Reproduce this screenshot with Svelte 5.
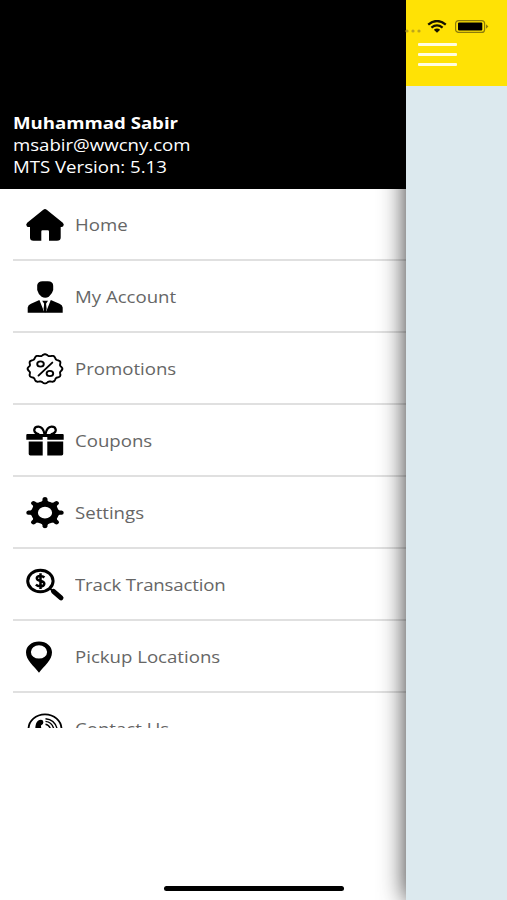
<script>
  const user = {
    name: "Muhammad Sabir",
    email: "msabir@wwcny.com",
    version: "MTS Version: 5.13",
  };

  const items = [
    { icon: "home", label: "Home" },
    { icon: "account", label: "My Account" },
    { icon: "promotions", label: "Promotions" },
    { icon: "coupons", label: "Coupons" },
    { icon: "settings", label: "Settings" },
    { icon: "track", label: "Track Transaction" },
    { icon: "pickup", label: "Pickup Locations" },
    { icon: "contact", label: "Contact Us" },
  ];

  const teeth = [0, 45, 90, 135, 180, 225, 270, 315];

  // wavy edge of the promotions badge
  function badgePath(count) {
    let points = [];
    for (let i = 0; i < 180; i++) {
      const a = (i / 180) * Math.PI * 2;
      const r = 0.95 + 0.05 * Math.cos(a * count);
      const x = (19 + 17.4 * r * Math.sin(a)).toFixed(2);
      const y = (15.8 - 14.6 * r * Math.cos(a)).toFixed(2);
      points.push(`${x} ${y}`);
    }
    return "M" + points.join("L") + "Z";
  }
</script>

<div class="screen">
  <aside class="drawer">
    <header class="profile">
      <div class="wide name">{user.name}</div>
      <div class="wide">{user.email}</div>
      <div class="wide">{user.version}</div>
    </header>

    <nav class="menu">
      {#each items as item}
        <div class="item">
          <svg class="icon" viewBox="0 0 38 32">
            {#if item.icon === "home"}
              <path d="M17.3.8Q19-.6 20.7.8L36.8 13.8Q38.6 15.6 37.2 17.3Q36.5 18.2 34.7 18V28.5Q34.7 31.7 31 31.7H23V22.5Q23 21.3 21.8 21.3H16.5Q15.3 21.3 15.3 22.5V31.7H7.5Q4 31.7 4 28.5V18Q1.6 18.3.8 17.2Q-.6 15.4 1.2 13.8Z" />
            {:else if item.icon === "account"}
              <path d="M11.2 4Q12 0 17 .2H21.4Q27.2 0 27.2 4.8V9Q26.5 12.6 22.8 15.7Q19.3 18 15.6 15.7Q12 12.8 11.2 9Z" />
              <path d="M1.7 31.7V26.4Q2 24 5 22.8L13.4 19L18 30.6L18.2 22.8L16.2 19.8H22L20 22.8L20.2 30.6L24.8 19L33.5 22.8Q36.4 24 36.7 26.4V31.7Z" />
              <path d="M18.2 22.5H20L20.6 28L19.1 31.7L17.6 28Z" />
            {:else if item.icon === "promotions"}
              <g class="line">
                <path d={badgePath(12)} />
                <path d="M12.5 22.6L26.3 9.6" />
                <ellipse cx="14.5" cy="11" rx="3.3" ry="2.6" />
                <ellipse cx="23.9" cy="20.5" rx="3.3" ry="2.6" />
              </g>
            {:else if item.icon === "coupons"}
              <path d="M1.3 9H36.7Q37.7 9 37.7 10V14.8H21.3V12H16.7V14.8H.3V10Q.3 9 1.3 9Z" />
              <path d="M2.7 16.4H16.7V30.4H4.3Q2.7 30.4 2.7 29ZM21.3 16.4H37.2V29Q37.2 30.4 35.6 30.4H21.3Z" />
              <path class="line bow" d="M18.5 9Q17.2 2.2 12.5 1.7Q8.6 1.6 8.2 5Q8.6 8.4 12.5 9M19.5 9Q20.8 2.2 25.5 1.7Q29.4 1.6 29.8 5Q29.4 8.4 25.5 9" />
            {:else if item.icon === "settings"}
              <g transform="translate(19 15.7) scale(1.2 1)">
                <circle class="ring" r="8.7" />
                {#each teeth as angle}
                  <path transform="rotate({angle})" d="M-3.4-10.2L-2.1-12.2V-13.9Q-1.8-15.6 0-15.6Q1.8-15.6 2.1-13.9V-12.2L3.4-10.2Z" />
                {/each}
              </g>
            {:else if item.icon === "track"}
              <ellipse class="lens" cx="14.4" cy="12" rx="12.7" ry="10.7" />
              <path class="handle" d="M27.5 22.4L35 28.8" />
              <path class="link" d="M23.5 19.2L27 22" />
              <path class="dollar" d="M18.4 8.5Q16.8 6.9 14.3 6.9Q10.8 7 10.8 9.3Q10.9 11.2 14.5 12Q18.4 12.7 18.3 14.8Q18 17.3 14.4 17.3Q11.6 17.3 9.9 15.6M14.5 4.2V19.9" />
            {:else if item.icon === "pickup"}
              <path fill-rule="evenodd" d="M13 .4C20.5.4 26 5.2 26 11.3C26 19.5 18 25 13 31.8C8 25 0 19.5 0 11.3C0 5.2 5.5.4 13 .4ZM13 4.2A8.1 6.7 0 1 0 13 17.6A8.1 6.7 0 1 0 13 4.2Z" />
            {:else}
              <ellipse class="globe" cx="19" cy="16" rx="16.5" ry="14.6" />
              <path d="M13.4 7Q17 6 17.4 9Q17.4 12 15 12.5Q14.7 15 17 18L12 22Q8.5 18 9.6 12.6Q10.3 8 13.4 7Z" />
              <path class="wave" d="M19.5 5.7Q30 6.8 31.5 18M19.5 8.4Q27 9.2 28.2 18M19.5 11.2Q24 12 25 18" />
            {/if}
          </svg>
          <span class="wide label" class:tight={item.icon === "track"}>{item.label}</span>
        </div>
      {/each}
    </nav>
  </aside>

  <main class="page">
    <div class="topbar">
      <div class="status">
        <svg class="dots" viewBox="0 0 16 4">
          <circle cx="2" cy="2" r="1.6" />
          <circle cx="8" cy="2" r="1.6" />
          <circle cx="14" cy="2" r="1.6" />
        </svg>
        <svg class="wifi" viewBox="0 0 20 13">
          <path d="M1.2 4.6Q10-2.6 18.8 4.6M4.4 7.6Q10 3.2 15.6 7.6" />
          <path class="solid" d="M6.8 9.8Q10 7.4 13.2 9.8L10 12.7Z" />
        </svg>
        <svg class="battery" viewBox="0 0 34 13">
          <rect class="shell" x=".6" y=".6" width="29" height="11.8" rx="3" />
          <rect x="3" y="2.5" width="24.3" height="8" rx="1" />
          <path class="tip" d="M31 4.3L33.4 6.5L31 8.7Z" />
        </svg>
      </div>
      <div class="burger">
        <i></i>
        <i></i>
        <i></i>
      </div>
    </div>
  </main>

  <div class="indicator"></div>
</div>

<style>
  :global(body) {
    background: #fff;
  }
  .screen {
    position: relative;
    display: flex;
    width: 507px;
    height: 900px;
    overflow: hidden;
    font-family: "Open Sans", "Noto Sans", sans-serif;
  }
  .drawer {
    width: 405.5px;
    height: 900px;
    background: #fff;
  }
  .profile {
    box-sizing: border-box;
    height: 189px;
    padding: 112px 0 0 13.4px;
    background: #000;
    color: #fff;
    font-size: 16px;
    line-height: 22.2px;
  }
  .wide {
    width: max-content;
    transform: scaleX(1.163);
    transform-origin: left center;
    white-space: nowrap;
  }
  .name {
    font-weight: 700;
  }
  .menu {
    height: 539px;
    overflow: hidden;
  }
  .item {
    box-sizing: border-box;
    display: flex;
    align-items: center;
    height: 72px;
    margin-left: 13px;
    padding: 2px 0 0 13px;
    border-bottom: 2px solid #e0e0e0;
  }
  .icon {
    width: 38px;
    height: 32px;
    margin-right: 10.5px;
    overflow: visible;
  }
  .label {
    color: #666;
    font-size: 16px;
    line-height: 22px;
  }
  .tight {
    letter-spacing: -0.15px;
  }
  .line {
    fill: none;
    stroke: #000;
    stroke-width: 1.9;
    stroke-linecap: round;
    stroke-linejoin: round;
  }
  .bow {
    stroke-width: 2.2;
  }
  .ring {
    fill: none;
    stroke: #000;
    stroke-width: 5.6;
  }
  .lens {
    fill: none;
    stroke: #000;
    stroke-width: 3;
  }
  .handle {
    stroke: #000;
    stroke-width: 5;
    stroke-linecap: round;
  }
  .link {
    stroke: #000;
    stroke-width: 2;
  }
  .dollar {
    fill: none;
    stroke: #000;
    stroke-width: 2.5;
  }
  .globe {
    fill: none;
    stroke: #000;
    stroke-width: 1.8;
  }
  .wave {
    fill: none;
    stroke: #000;
    stroke-width: 1.4;
  }
  .page {
    flex: 1;
    background: #dce9ee;
    box-shadow: 0 0 24px rgba(0, 0, 0, 0.8);
    clip-path: inset(0 0 0 -30px);
  }
  .topbar {
    height: 86px;
    background: #ffe205;
  }
  .status {
    display: flex;
    height: 43px;
    padding-top: 20px;
    box-sizing: border-box;
  }
  .dots {
    width: 16px;
    height: 4px;
    margin: 9px 6.5px 0 -1px;
    fill: #bca51c;
  }
  .wifi {
    width: 20px;
    height: 13px;
    margin-right: 7.5px;
    fill: none;
    stroke: #151200;
    stroke-width: 2.3;
  }
  .solid {
    fill: #151200;
    stroke: none;
  }
  .battery {
    width: 34px;
    height: 13px;
  }
  .shell {
    fill: none;
    stroke: #8c7c0b;
    stroke-width: 1.2;
  }
  .tip {
    fill: #8c7c0b;
  }
  .burger {
    display: flex;
    flex-direction: column;
    gap: 7px;
    width: 39px;
    margin-left: 12.5px;
  }
  .burger i {
    height: 3px;
    border-radius: 1px;
    background: #fffde0;
  }
  .indicator {
    position: absolute;
    left: 164px;
    bottom: 9px;
    width: 180px;
    height: 5px;
    border-radius: 3px;
    background: #000;
  }
</style>
